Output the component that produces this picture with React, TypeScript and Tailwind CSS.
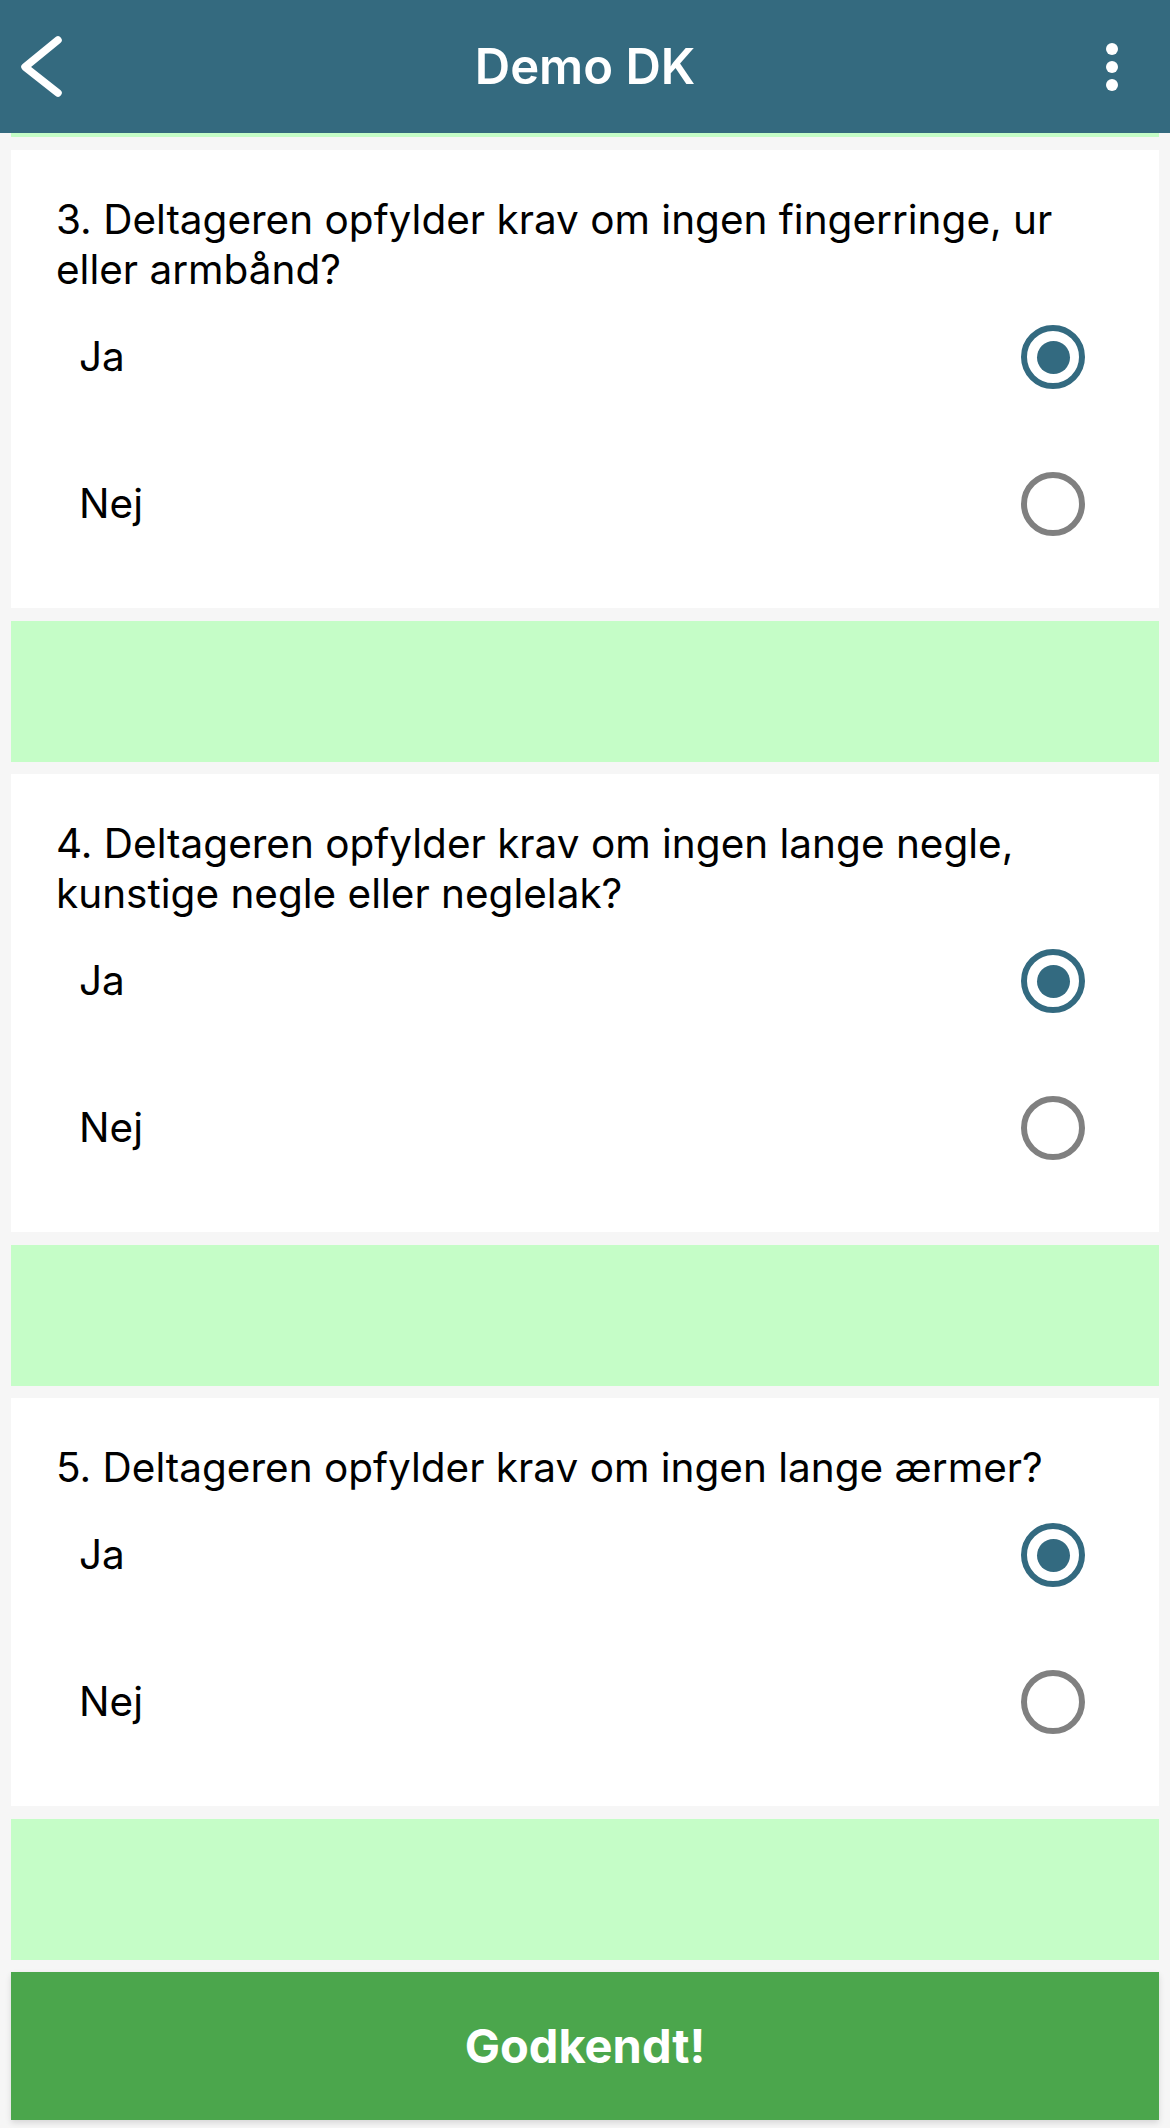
import React from "react";

type Q = { text: string; answer: "Ja" | "Nej" };

const questions: Q[] = [
  { text: "3. Deltageren opfylder krav om ingen fingerringe, ur eller armbånd?", answer: "Ja" },
  { text: "4. Deltageren opfylder krav om ingen lange negle, kunstige negle eller neglelak?", answer: "Ja" },
  { text: "5. Deltageren opfylder krav om ingen lange ærmer?", answer: "Ja" },
];

function Radio({ checked }: { checked: boolean }) {
  return checked ? (
    <div className="w-[64px] h-[64px] rounded-full border-[6px] border-[#336a80] flex items-center justify-center">
      <div className="w-[33px] h-[33px] rounded-full bg-[#336a80]" />
    </div>
  ) : (
    <div className="w-[64px] h-[64px] rounded-full border-[6px] border-[#808080]" />
  );
}

function Option({ label, checked, className }: { label: string; checked: boolean; className?: string }) {
  return (
    <div className={"h-[124px] flex items-center justify-between pl-[68px] pr-[74px] " + (className ?? "")}>
      <span className="text-[40.5px] leading-[50px] text-black">{label}</span>
      <Radio checked={checked} />
    </div>
  );
}

function Card({ q }: { q: Q }) {
  return (
    <div className="bg-white mx-[11px] pt-[45px] pb-[42px]">
      <p className="pl-[45px] pr-[30px] text-[40.5px] leading-[50px] text-black">{q.text}</p>
      <Option label="Ja" checked={q.answer === "Ja"} />
      <Option label="Nej" checked={q.answer === "Nej"} className="mt-[23px]" />
    </div>
  );
}

export default function App() {
  return (
    <div className="w-[1170px] h-[2128px] bg-[#f6f6f6] font-[Inter,sans-serif] overflow-hidden flex flex-col">
      <header className="h-[133px] bg-[#346a7f] flex items-center justify-between relative shrink-0">
        <svg width="90" height="133" viewBox="0 0 90 133" className="shrink-0">
          <polyline points="58,40 25,67 58,93" fill="none" stroke="white" strokeWidth="7.5" strokeLinecap="round" strokeLinejoin="round" />
        </svg>
        <h1 className="absolute left-0 right-0 text-center text-white text-[49px] leading-[49px] font-semibold pointer-events-none">
          Demo DK
        </h1>
        <svg width="116" height="133" viewBox="0 0 116 133" className="shrink-0">
          <circle cx="58" cy="49" r="6" fill="white" />
          <circle cx="58" cy="67" r="6" fill="white" />
          <circle cx="58" cy="85" r="6" fill="white" />
        </svg>
      </header>
      <div className="h-[4px] mx-[11px] bg-[#c5fdc7] shrink-0" />
      <div className="flex flex-col pt-[13px]">
        {questions.map((q, i) => (
          <div key={i} className="flex flex-col">
            <Card q={q} />
            <div className="mx-[11px] mt-[13px] mb-[12px] h-[141px] bg-[#c5fdc7]" />
          </div>
        ))}
        <button className="mx-[11px] h-[148px] bg-[#4ba64c] text-white text-[47px] font-bold flex items-center justify-center shadow-[0_3px_6px_rgba(0,0,0,0.12)]">
          Godkendt!
        </button>
      </div>
    </div>
  );
}
